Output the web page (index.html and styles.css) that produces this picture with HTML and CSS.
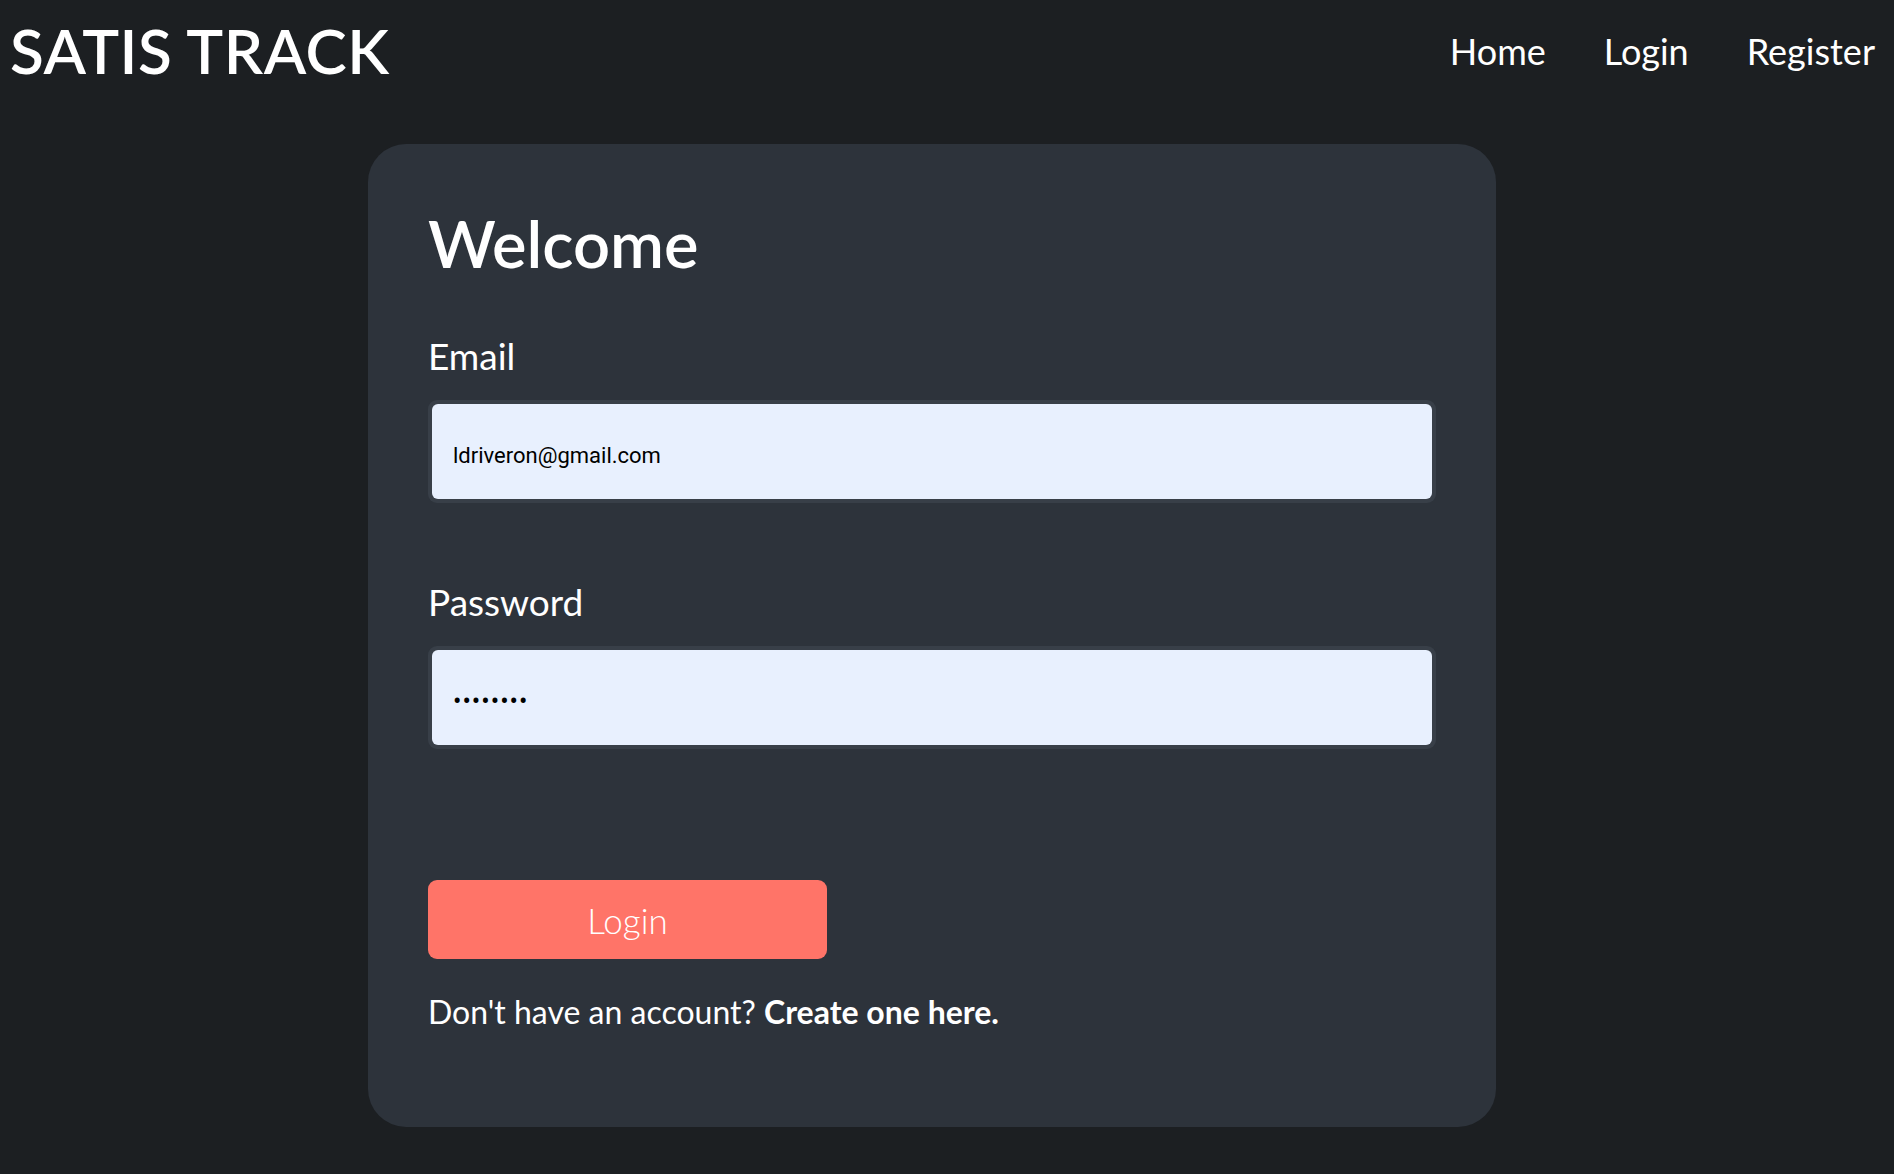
FILE: index.html
```html
<!DOCTYPE html>
<html lang="en">
<head>
<meta charset="utf-8">
<title>Satis Track - Login</title>
<link rel="stylesheet" href="styles.css">
</head>
<body>
<header class="topbar">
  <div class="brand">SATIS TRACK</div>
  <nav class="nav">
    <a class="nav-link" href="#">Home</a>
    <a class="nav-link" href="#">Login</a>
    <a class="nav-link" href="#">Register</a>
  </nav>
</header>
<main class="main">
  <form class="card">
    <h1 class="title">Welcome</h1>
    <label class="label" for="email">Email</label>
    <div class="field"><input class="input" id="email" type="email" value="ldriveron@gmail.com"></div>
    <label class="label label-pw" for="pw">Password</label>
    <div class="field"><input class="input input-pw" id="pw" type="password" value="password"></div>
    <button class="btn" type="button">Login</button>
    <p class="signup">Don't have an account? <a class="signup-link" href="#">Create one here.</a></p>
  </form>
</main>
</body>
</html>
```
FILE: styles.css
```css
* { box-sizing: border-box; }
html, body { margin: 0; padding: 0; }
body {
  background: #1c1f22;
  color: #ffffff;
  font-family: Lato, "Open Sans", sans-serif;
  width: 1894px;
  height: 1174px;
  overflow: hidden;
}
.topbar {
  display: flex;
  justify-content: space-between;
  align-items: flex-start;
  height: 144px;
  padding: 0 19px 0 10px;
}
.brand {
  font-size: 62px;
  font-weight: 600;
  line-height: 1;
  margin-top: 19px;
  letter-spacing: 0.5px;
}
.nav {
  display: flex;
  gap: 58px;
  margin-top: 33px;
}
.nav-link {
  color: #ffffff;
  text-decoration: none;
  font-size: 36px;
  line-height: 1;
}
.main {
  padding-left: 368px;
}
.card {
  width: 1128px;
  height: 983px;
  background: #2d333b;
  border-radius: 38px;
  padding: 60px 60px 0 60px;
  display: flex;
  flex-direction: column;
  align-items: flex-start;
}
.title {
  margin: 7px 0 0 0;
  font-size: 65px;
  line-height: 1;
  font-weight: 600;
}
.label {
  font-size: 37px;
  line-height: 1;
  margin-top: 61px;
}
.label-pw { margin-top: 80px; }
.field {
  width: 1008px;
  height: 103px;
  margin-top: 26px;
  padding: 4px;
  background: #383f48;
  border-radius: 9px;
}
.input {
  width: 100%;
  height: 100%;
  border: none;
  outline: none;
  border-radius: 6px;
  background: #e8f0fe;
  color: #000;
  font-family: Roboto, "Liberation Sans", sans-serif;
  font-size: 22px;
  padding: 8px 0 0 21px;
}
.input-pw { font-size: 25px; letter-spacing: 1px; }
.btn {
  margin-top: 131px;
  width: 399px;
  height: 79px;
  border: none;
  border-radius: 9px;
  background: #ff7468;
  color: #fff;
  font-family: Lato, sans-serif;
  font-weight: 300;
  font-size: 35px;
  padding: 0;
}
.signup {
  margin: 37px 0 0 0;
  font-size: 32px;
  line-height: 1;
}
.signup-link {
  color: #fff;
  font-weight: 700;
  text-decoration: none;
}
```
